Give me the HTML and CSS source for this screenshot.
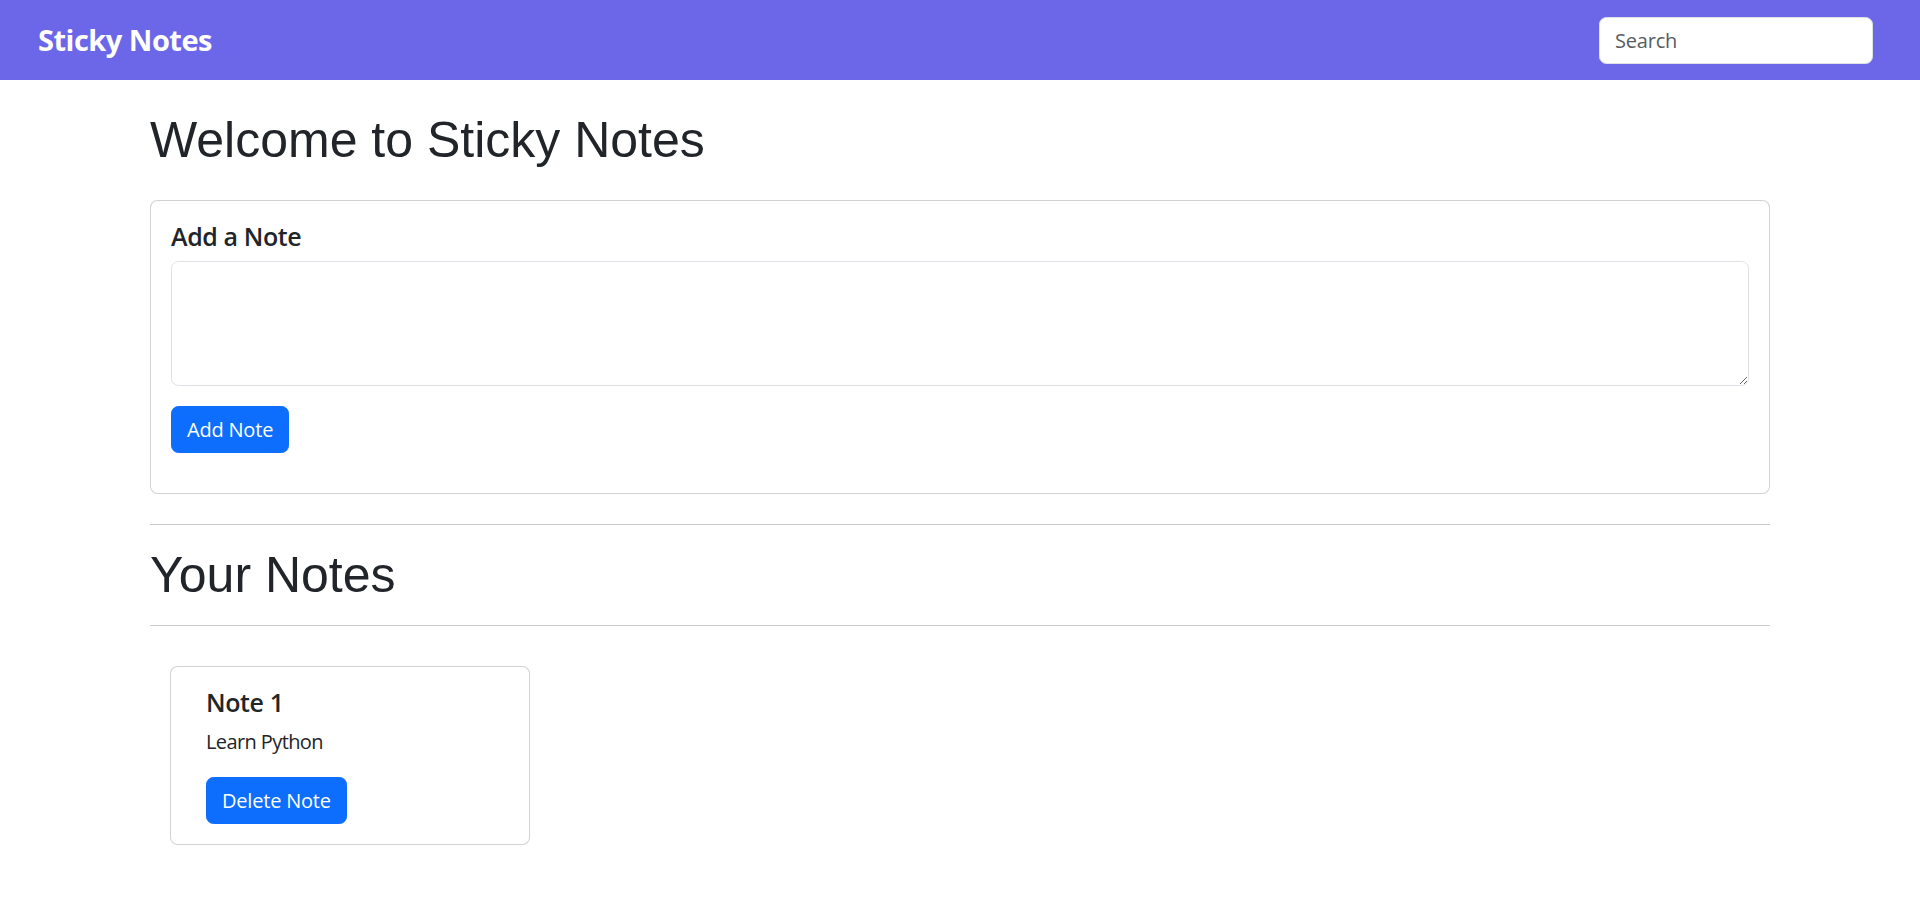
FILE: index.html
```html
<!DOCTYPE html>
<html lang="en">
<head>
<meta charset="utf-8">
<title>Sticky Notes</title>
<link rel="stylesheet" href="styles.css">
</head>
<body>
<nav class="navbar">
  <a class="brand" href="#">Sticky Notes</a>
  <form class="search-form">
    <input class="search-input" type="search" placeholder="Search" aria-label="Search">
  </form>
</nav>

<main class="container">
  <h1 class="page-title">Welcome to Sticky Notes</h1>

  <section class="card add-card">
    <h5 class="card-title">Add a Note</h5>
    <textarea class="note-input"></textarea>
    <button class="btn btn-primary add-btn" type="button">Add Note</button>
  </section>

  <hr class="divider">
  <h1 class="section-title">Your Notes</h1>
  <hr class="divider">

  <div class="notes">
    <div class="card note-card">
      <h5 class="card-title">Note 1</h5>
      <p class="note-text">Learn Python</p>
      <button class="btn btn-primary" type="button">Delete Note</button>
    </div>
  </div>
</main>
</body>
</html>
```

FILE: styles.css
```css
* { box-sizing: border-box; }

body {
  margin: 0;
  font-family: "Open Sans", "Noto Sans", sans-serif;
  font-size: 20px;
  line-height: 1.5;
  color: #212529;
  background: #fff;
}

.navbar {
  height: 80px;
  background: #6c67e9;
  display: flex;
  align-items: center;
  justify-content: space-between;
  padding: 0 47px 0 38px;
}

.brand {
  color: #fff;
  text-decoration: none;
  font-weight: 700;
  font-size: 29px;
  line-height: 1.2;
  letter-spacing: -0.5px;
}

.search-form { margin: 0; display: flex; }

.search-input {
  width: 274px;
  height: 47px;
  padding: 0 15px;
  border: 1px solid #dee2e6;
  border-radius: 7.5px;
  font-family: inherit;
  font-size: 20px;
  letter-spacing: -0.2px;
  color: #212529;
  background: #fff;
  outline: none;
}
.search-input::placeholder { color: #595c5f; }

.container {
  width: 1620px;
  margin: 0 auto;
  padding-top: 30px;
}

.page-title,
.section-title {
  font-family: "Liberation Sans", Arial, sans-serif;
  font-weight: 400;
  font-size: 50px;
  line-height: 1.2;
  margin: 0 0 30px;
}

.section-title { margin: 0; padding: 20px 0; }

.card {
  border: 1px solid rgba(0, 0, 0, 0.175);
  border-radius: 7.5px;
  background: #fff;
}

.add-card {
  padding: 20px 20px 0;
  margin-bottom: 30px;
}

.card-title {
  font-size: 25px;
  font-weight: 600;
  line-height: 1.2;
  letter-spacing: -0.4px;
  margin: 0 0 10px;
}

.note-input {
  display: block;
  width: 100%;
  height: 125px;
  margin: 0 0 20px;
  padding: 7px 15px;
  border: 1px solid #dee2e6;
  border-radius: 7.5px;
  font-family: inherit;
  font-size: 20px;
  resize: vertical;
  outline: none;
}

.btn {
  display: inline-flex;
  align-items: center;
  height: 47px;
  padding: 0 15px;
  border: 1px solid transparent;
  border-radius: 7.5px;
  font-family: inherit;
  font-size: 20px;
  line-height: 1.5;
  letter-spacing: -0.2px;
  cursor: pointer;
}

.btn-primary {
  color: #fff;
  background: #0d6efd;
  border-color: #0d6efd;
}

.add-btn { margin-bottom: 40px; }

.divider {
  margin: 0;
  border: 0;
  border-top: 1px solid #212529;
  opacity: 0.25;
}

.notes {
  display: flex;
  flex-wrap: wrap;
  padding-top: 20px;
}

.note-card {
  width: 360px;
  margin: 20px;
  padding: 20px 20px 20px 35px;
}

.note-text {
  margin: 0 0 20px;
  letter-spacing: -0.6px;
}
```
